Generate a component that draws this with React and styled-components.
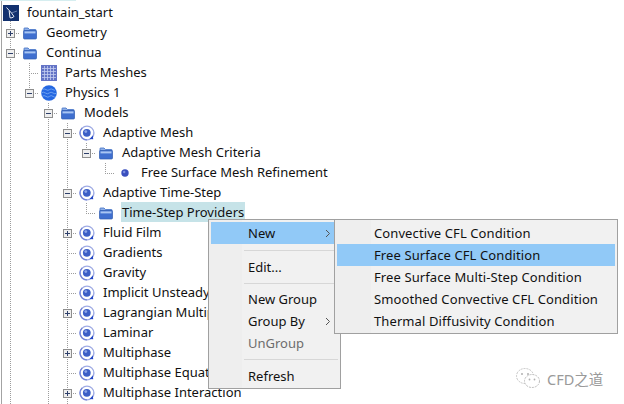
import styled, { createGlobalStyle } from "styled-components";

const GlobalStyle = createGlobalStyle`
  html, body {
    margin: 0;
    padding: 0;
    background: #fff;
  }
`;

const dots = "repeating-linear-gradient(to bottom, #9c9c9c 0 1px, transparent 1px 2px)";
const dotsH = "repeating-linear-gradient(to right, #9c9c9c 0 1px, transparent 1px 2px)";

const guideBackground = ({ $kind }) => {
  if ($kind === "pipe") return `${dots} 9px 0 / 1px 100% no-repeat`;
  if ($kind === "tee")
    return `${dots} 9px 0 / 1px 100% no-repeat, ${dotsH} 9px 10px / 10px 1px no-repeat`;
  if ($kind === "elbow")
    return `${dots} 9px 0 / 1px 10px no-repeat, ${dotsH} 9px 10px / 10px 1px no-repeat`;
  if ($kind === "start") return `${dots} 9px 10px / 1px 10px no-repeat`;
  return "none";
};

const FolderIcon = () => (
  <svg width="14" height="13" viewBox="0 0 14 13">
    <path d="M1 3V1.5Q1 1 1.5 1H5L6.5 2.5H12.5Q13 2.5 13 3V4H1Z" fill="#8fb0e8" stroke="#3f6fc4" strokeWidth=".8" />
    <rect x=".5" y="3.5" width="13" height="8.5" rx="1" fill="#3f6fcf" stroke="#2f5bb0" strokeWidth=".7" />
    <rect x="1.5" y="4.4" width="11" height="2" fill="#a9c6f2" />
  </svg>
);

const ModelIcon = () => (
  <svg width="16" height="16" viewBox="0 0 16 16">
    <circle cx="8" cy="8" r="6.9" fill="#fff" stroke="#9fabe4" strokeWidth="1.4" />
    <path d="M3.2 3A6.9 6.9 0 0 0 8 14.9" fill="none" stroke="#7384d6" strokeWidth="1.2" />
    <circle cx="7.8" cy="7.8" r="3.9" fill="#3c5fc6" />
    <circle cx="6.8" cy="6.6" r="1.4" fill="#8ea6e6" />
    <path d="M10.6 14L14.2 14.2L13.8 10.6Z" fill="#2447c4" />
  </svg>
);

const GridIcon = () => (
  <svg width="16" height="16" viewBox="0 0 16 16">
    <rect width="16" height="16" fill="#6474c6" />
    <path
      d="M3.5 1V15M6.5 1V15M9.5 1V15M12.5 1V15M1 3.5H15M1 6.5H15M1 9.5H15M1 12.5H15"
      stroke="#c3cbf0"
      strokeWidth=".8"
    />
  </svg>
);

const SphereIcon = () => (
  <svg width="16" height="16" viewBox="0 0 16 16">
    <circle cx="8" cy="8" r="7.8" fill="#2568e2" />
    <path
      d="M1.4 4.6Q3 3.2 5 4.6T8.5 4.6T12 4.6T14.6 4.6M.4 8Q2.4 6.4 4.4 8T8.2 8T12 8T15.6 8M1.2 11.4Q3 9.8 5 11.4T8.5 11.4T12 11.4T14.8 11.4"
      fill="none"
      stroke="#74a6f2"
      strokeWidth=".9"
    />
  </svg>
);

const BulletIcon = () => (
  <svg width="8" height="8" viewBox="0 0 8 8">
    <circle cx="4" cy="4" r="3.7" fill="#3a4fbe" />
    <circle cx="3.2" cy="3" r="1.2" fill="#7d8fe0" />
  </svg>
);

const LogoIcon = () => (
  <svg width="16" height="16" viewBox="0 0 16 16">
    <rect width="16" height="16" fill="#12306e" />
    <path d="M3.5 2.5L8.5 8L11 11.5Q9 13.5 7 12.8L6.2 6" fill="none" stroke="#e8edf6" strokeWidth="1" />
    <path d="M8.5 8L14 6" fill="none" stroke="#7f93bd" strokeWidth=".8" />
  </svg>
);

const ICONS = {
  folder: FolderIcon,
  model: ModelIcon,
  grid: GridIcon,
  sphere: SphereIcon,
  bullet: BulletIcon,
  logo: LogoIcon,
};

// pipes: one letter per column left of the node, "|" for a guide line and "." for none
const ROWS = [
  { pipes: "", guide: "none", icon: "logo", label: "fountain_start", root: true },
  { pipes: "", guide: "tee", box: "plus", icon: "folder", label: "Geometry" },
  { pipes: "", guide: "tee", box: "minus", icon: "folder", label: "Continua" },
  { pipes: "|", guide: "tee", icon: "grid", label: "Parts Meshes" },
  { pipes: "|", guide: "elbow", box: "minus", icon: "sphere", label: "Physics 1" },
  { pipes: "|.", guide: "tee", box: "minus", icon: "folder", label: "Models" },
  { pipes: "|.|", guide: "tee", box: "minus", icon: "model", label: "Adaptive Mesh" },
  { pipes: "|.||", guide: "elbow", box: "minus", icon: "folder", label: "Adaptive Mesh Criteria" },
  { pipes: "|.||.", guide: "elbow", icon: "bullet", label: "Free Surface Mesh Refinement" },
  { pipes: "|.|", guide: "tee", box: "minus", icon: "model", label: "Adaptive Time-Step" },
  { pipes: "|.||", guide: "elbow", icon: "folder", label: "Time-Step Providers", selected: true },
  { pipes: "|.|", guide: "tee", box: "plus", icon: "model", label: "Fluid Film" },
  { pipes: "|.|", guide: "tee", icon: "model", label: "Gradients" },
  { pipes: "|.|", guide: "tee", icon: "model", label: "Gravity" },
  { pipes: "|.|", guide: "tee", icon: "model", label: "Implicit Unsteady" },
  { pipes: "|.|", guide: "tee", box: "plus", icon: "model", label: "Lagrangian Multiphase" },
  { pipes: "|.|", guide: "tee", icon: "model", label: "Laminar" },
  { pipes: "|.|", guide: "tee", box: "plus", icon: "model", label: "Multiphase" },
  { pipes: "|.|", guide: "tee", icon: "model", label: "Multiphase Equation of State" },
  { pipes: "|.|", guide: "tee", box: "plus", icon: "model", label: "Multiphase Interaction" },
  { pipes: "|.|", guide: "pipe", label: "" },
];

const MENU = [
  { label: "New", arrow: true, active: true },
  { separator: true, height: 12 },
  { label: "Edit..." },
  { separator: true, height: 10 },
  { label: "New Group" },
  { label: "Group By", arrow: true },
  { label: "UnGroup", disabled: true },
  { separator: true, height: 11 },
  { label: "Refresh" },
];

const SUBMENU = [
  { label: "Convective CFL Condition" },
  { label: "Free Surface CFL Condition", active: true },
  { label: "Free Surface Multi-Step Condition" },
  { label: "Smoothed Convective CFL Condition" },
  { label: "Thermal Diffusivity Condition" },
];

const TreeRow = ({ row }) => {
  const Icon = row.icon && ICONS[row.icon];
  return (
    <Row>
      {[...row.pipes].map((p, i) => (
        <Guide key={i} $kind={p === "|" ? "pipe" : "none"} />
      ))}
      {row.root ? (
        <Guide $kind="start">
          <Icon />
        </Guide>
      ) : (
        <Guide $kind={row.guide}>{row.box && <Expander $plus={row.box === "plus"} />}</Guide>
      )}
      {!row.root && Icon && (
        <IconCell>
          <Icon />
        </IconCell>
      )}
      {row.label && <Label $selected={row.selected}>{row.label}</Label>}
    </Row>
  );
};

const App = () => {
  return (
    <Page>
      <GlobalStyle />
      <TopEdge />
      <Tree>
        {ROWS.map((row, i) => (
          <TreeRow key={i} row={row} />
        ))}
      </Tree>
      <ContextMenu $gutter={33}>
        {MENU.map((item, i) =>
          item.separator ? (
            <Separator key={i} $height={item.height} />
          ) : (
            <MenuItem key={i} $active={item.active} $disabled={item.disabled}>
              {item.label}
              {item.arrow && (
                <Arrow viewBox="0 0 6 9">
                  <path d="M1 1L4.5 4.5L1 8" fill="none" stroke="#555" strokeWidth="1" />
                </Arrow>
              )}
            </MenuItem>
          )
        )}
      </ContextMenu>
      <SubMenu $gutter={36}>
        {SUBMENU.map((item) => (
          <SubItem key={item.label} $active={item.active}>
            {item.label}
          </SubItem>
        ))}
      </SubMenu>
      <Watermark>
        <svg width="26" height="22" viewBox="0 0 26 22">
          <ellipse cx="10" cy="9" rx="8.5" ry="7.5" fill="none" stroke="#c4c4c4" strokeWidth="1" strokeDasharray="2 1" />
          <ellipse cx="17" cy="14" rx="7.5" ry="6.5" fill="#fff" stroke="#bdbdbd" strokeWidth="1" strokeDasharray="2 1" />
          <circle cx="7" cy="7" r="1" fill="#b0b0b0" />
          <circle cx="13" cy="7" r="1" fill="#b0b0b0" />
          <circle cx="14.5" cy="12.5" r=".9" fill="#b0b0b0" />
          <circle cx="19.5" cy="12.5" r=".9" fill="#b0b0b0" />
        </svg>
        <WatermarkText>CFD之道</WatermarkText>
      </Watermark>
    </Page>
  );
};

const Page = styled.div`
  position: relative;
  width: 624px;
  height: 404px;
  overflow: hidden;
  background: #fff;
  font-family: "Noto Sans", "Open Sans", sans-serif;
  font-size: 13px;
  color: #111;
`;

const TopEdge = styled.div`
  width: 76px;
  height: 1px;
  background: #d6eef0;
`;

const Tree = styled.div`
  display: flex;
  flex-direction: column;
  height: 403px;
  margin-left: 1px;
  padding-top: 2px;
  box-sizing: border-box;
  box-shadow: inset 1px 0 #a3a3a3;
`;

const Row = styled.div`
  display: flex;
  align-items: center;
  flex: none;
  height: 20px;
`;

const Guide = styled.div`
  display: flex;
  align-items: center;
  justify-content: center;
  flex: none;
  width: 19px;
  height: 20px;
  background: ${guideBackground};
`;

const Expander = styled.span`
  display: block;
  position: relative;
  box-sizing: border-box;
  width: 9px;
  height: 9px;
  border: 1px solid #8e8e8e;
  background: #eeeeee;
  margin-left: -1px;

  &::before {
    content: "";
    position: absolute;
    left: 1px;
    top: 3px;
    width: 5px;
    height: 1px;
    background: #2d3f6a;
  }

  &::after {
    content: "";
    display: ${(p) => (p.$plus ? "block" : "none")};
    position: absolute;
    left: 3px;
    top: 1px;
    width: 1px;
    height: 5px;
    background: #2d3f6a;
  }
`;

const IconCell = styled.div`
  display: flex;
  align-items: center;
  justify-content: center;
  flex: none;
  width: 19px;
  height: 20px;
  background: #fff;
`;

const Label = styled.span`
  margin-left: ${(p) => (p.$selected ? "6px" : "7px")};
  margin-bottom: ${(p) => (p.$selected ? "2px" : "0")};
  padding: 0 ${(p) => (p.$selected ? "1px" : "0")};
  height: 20px;
  line-height: ${(p) => (p.$selected ? "21px" : "19px")};
  white-space: nowrap;
  background: ${(p) => (p.$selected ? "#c6e3e8" : "transparent")};
`;

const MenuPanel = styled.div`
  position: absolute;
  box-sizing: border-box;
  background: linear-gradient(
    to right,
    #eeeeee ${(p) => p.$gutter}px,
    #f1f1f1 ${(p) => p.$gutter}px
  );
  border: 1px solid #a0a0a0;
  padding: 2px;
`;

const ContextMenu = styled(MenuPanel)`
  left: 208px;
  top: 219px;
  width: 133px;
  height: 170px;
`;

const SubMenu = styled(MenuPanel)`
  left: 334px;
  top: 219px;
  width: 284px;
  height: 115px;
`;

const MenuItem = styled.div`
  display: flex;
  align-items: center;
  justify-content: space-between;
  box-sizing: border-box;
  height: 22px;
  padding: 0 7px 0 37px;
  background: ${(p) => (p.$active ? "#91c9f7" : "transparent")};
  color: ${(p) => (p.$disabled ? "#6d6d6d" : "#111")};
`;

const SubItem = styled.div`
  display: flex;
  align-items: center;
  height: 22px;
  padding-left: 37px;
  letter-spacing: 0.1px;
  background: ${(p) => (p.$active ? "#91c9f7" : "transparent")};
`;

const Arrow = styled.svg`
  flex: none;
  width: 6px;
  height: 9px;
`;

const Separator = styled.div`
  display: flex;
  align-items: center;
  height: ${(p) => p.$height}px;
  padding-left: 33px;

  &::before {
    content: "";
    flex: 1;
    height: 1px;
    background: #d7d7d7;
  }
`;

const Watermark = styled.div`
  position: absolute;
  left: 515px;
  top: 367px;
  display: flex;
  align-items: center;
  gap: 6px;
`;

const WatermarkText = styled.span`
  font-family: "Noto Sans", "Noto Sans CJK SC", sans-serif;
  font-size: 14.5px;
  color: #9a9a9a;
`;

export default App;
